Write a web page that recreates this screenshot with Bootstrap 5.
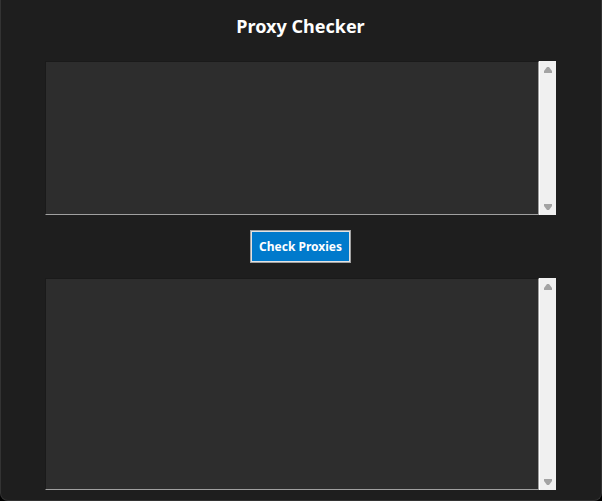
<!DOCTYPE html>
<html lang="en">
<head>
<meta charset="utf-8">
<meta name="viewport" content="width=device-width, initial-scale=1">
<title>Proxy Checker</title>
<link href="https://cdn.jsdelivr.net/npm/bootstrap@5.3.0/dist/css/bootstrap.min.css" rel="stylesheet">
<style>
  body { background: #000; font-family: "Segoe UI", "Noto Sans", "Open Sans", sans-serif; }
  .app-window {
    background: #1e1e1e;
    border: 1px solid #333;
    border-top: 0;
    border-radius: 0 0 8px 8px;
    padding: 14px 45px 10px 44px;
  }
  .app-title { color: #fff; font-size: 18px; line-height: 24px; font-weight: 700; margin-bottom: 23px; }
  .text-pane { background: #f0f0f0; }
  .text-pane textarea {
    background: #2d2d2d;
    color: #fff;
    border: 1px solid;
    border-color: #1a1a1a #a0a0a0 #a0a0a0 #1a1a1a;
    font-size: 14px;
    line-height: 19px;
    resize: none;
    outline: 0;
    overflow: hidden;
  }
  .scroll-track { width: 17px; background: #f0f0f0; border-left: 1px solid #fff; }
  .scroll-step { height: 17px; color: #a3a3a3; }
  .check-btn {
    --bs-btn-color: #fff;
    --bs-btn-bg: #007acc;
    --bs-btn-border-color: #a0a0a0;
    --bs-btn-hover-color: #fff;
    --bs-btn-hover-bg: #0068b0;
    --bs-btn-active-color: #fff;
    --bs-btn-active-bg: #005a9e;
    --bs-btn-font-size: 12px;
    --bs-btn-font-weight: 700;
    --bs-btn-line-height: 19px;
    --bs-btn-padding-x: 8px;
    --bs-btn-padding-y: 6px;
    box-shadow: inset 0 0 0 1px #e3e3e3;
    margin: 15px 0;
  }
</style>
</head>
<body>
<main class="app-window min-vh-100 d-flex flex-column">
  <h1 class="app-title text-center">Proxy Checker</h1>

  <div class="text-pane d-flex">
    <textarea class="flex-fill p-0" rows="8" aria-label="Proxies to check"></textarea>
    <div class="scroll-track d-flex flex-column justify-content-between">
      <button type="button" class="scroll-step btn p-0 border-0 rounded-0 d-flex justify-content-center align-items-center" aria-label="Scroll up">
        <svg width="8" height="6" viewBox="0 0 8 6" fill="currentColor"><path d="M3 0h2l3 4v2H0V4z"/></svg>
      </button>
      <button type="button" class="scroll-step btn p-0 border-0 rounded-0 d-flex justify-content-center align-items-center" aria-label="Scroll down">
        <svg width="8" height="6" viewBox="0 0 8 6" fill="currentColor"><path d="M3 6h2l3-4V0H0v2z"/></svg>
      </button>
    </div>
  </div>

  <button type="button" class="check-btn btn rounded-0 align-self-center">Check Proxies</button>

  <div class="text-pane d-flex flex-fill">
    <textarea class="flex-fill p-0" rows="11" aria-label="Results" readonly></textarea>
    <div class="scroll-track d-flex flex-column justify-content-between">
      <button type="button" class="scroll-step btn p-0 border-0 rounded-0 d-flex justify-content-center align-items-center" aria-label="Scroll up">
        <svg width="8" height="6" viewBox="0 0 8 6" fill="currentColor"><path d="M3 0h2l3 4v2H0V4z"/></svg>
      </button>
      <button type="button" class="scroll-step btn p-0 border-0 rounded-0 d-flex justify-content-center align-items-center" aria-label="Scroll down">
        <svg width="8" height="6" viewBox="0 0 8 6" fill="currentColor"><path d="M3 6h2l3-4V0H0v2z"/></svg>
      </button>
    </div>
  </div>
</main>
<script src="https://cdn.jsdelivr.net/npm/bootstrap@5.3.0/dist/js/bootstrap.bundle.min.js"></script>
</body>
</html>
